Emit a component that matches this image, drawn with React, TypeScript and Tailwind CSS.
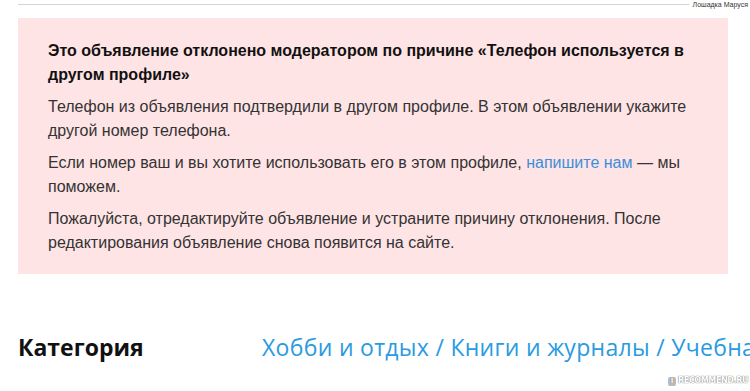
import React from 'react';

const arial = { fontFamily: '"Liberation Sans", Arial, sans-serif' };

export default function App() {
  return (
    <div className="relative w-[750px] h-[391px] overflow-hidden bg-white">
      {/* cropped header strip */}
      <div className="flex items-center h-[9px] pl-[18px]">
        <div className="flex-1 border-t border-[#d4d4d4]" />
        <span className="pl-[4px] pr-[2px] text-[7px] leading-none text-[#333]" style={arial}>
          Лошадка Маруся
        </span>
      </div>

      <div className="mt-[9px] ml-[18px] w-[710px] bg-[#ffe4e6] pl-[30px] pr-[26px] pt-[21px] pb-[19px] text-[16px] leading-[24px] text-[#333]" style={arial}>
        <p className="font-bold text-[#111] mb-[8px] -mr-[4px]">
          Это объявление отклонено модератором по причине «Телефон используется в другом профиле»
        </p>
        <p className="mb-[8px]">
          Телефон из объявления подтвердили в другом профиле. В этом объявлении укажите другой номер телефона.
        </p>
        <p className="mb-[8px]">
          Если номер ваш и вы хотите использовать его в этом профиле,{' '}
          <a className="text-[#3a8fd9]">напишите нам</a> — мы поможем.
        </p>
        <p>
          Пожалуйста, отредактируйте объявление и устраните причину отклонения. После редактирования объявление снова появится на сайте.
        </p>
      </div>

      <div className="flex items-center mt-[56px] pl-[18px] whitespace-nowrap" style={{ fontFamily: '"Open Sans", sans-serif' }}>
        <div className="shrink-0 w-[244px] text-[23px] font-bold text-[#111]">Категория</div>
        <div className="shrink-0 text-[23px] tracking-[0.3px] text-[#2a9be0]">Хобби и отдых / Книги и журналы / Учебная</div>
      </div>

      {/* watermark */}
      <div className="absolute right-[2px] bottom-[4px] flex items-center gap-[2px] text-[8px] font-bold text-white" style={{ fontFamily: '"DejaVu Sans", sans-serif', textShadow: '0 0 1px #777, 0 0 1px #777' }}>
        <span className="flex items-center justify-center w-[8px] h-[9px] rounded-[2px] bg-[#bbb] text-[7px] text-white">I</span>
        <span className="tracking-[-0.4px]">RECOMMEND.RU</span>
      </div>
    </div>
  );
}
